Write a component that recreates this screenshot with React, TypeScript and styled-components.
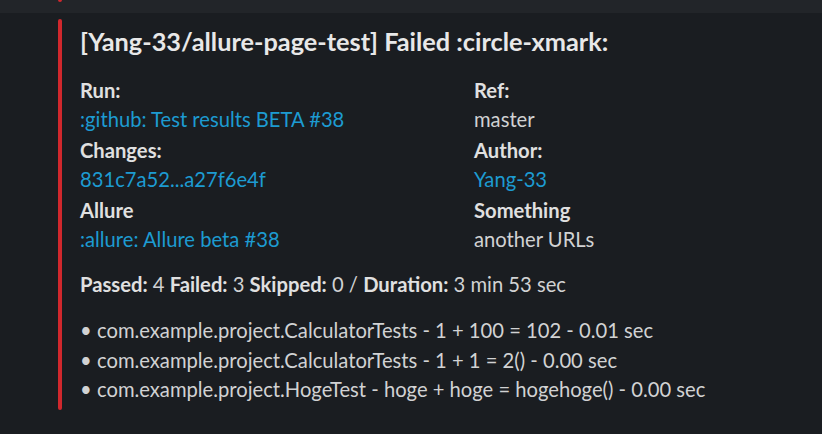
import styled, { createGlobalStyle } from 'styled-components';

const GlobalStyle = createGlobalStyle`
  html, body {
    margin: 0;
    padding: 0;
    background: #1a1d21;
  }
  body {
    font-family: Lato, 'Noto Sans', sans-serif;
    color: #d1d2d3;
  }
`;

interface Field {
  label: string;
  value: string;
  link?: boolean;
}

const fields: Field[] = [
  { label: 'Run:', value: ':github: Test results BETA #38', link: true },
  { label: 'Ref:', value: 'master' },
  { label: 'Changes:', value: '831c7a52...a27f6e4f', link: true },
  { label: 'Author:', value: 'Yang-33', link: true },
  { label: 'Allure', value: ':allure: Allure beta #38', link: true },
  { label: 'Something', value: 'another URLs' },
];

const tests = [
  'com.example.project.CalculatorTests - 1 + 100 = 102 - 0.01 sec',
  'com.example.project.CalculatorTests - 1 + 1 = 2() - 0.00 sec',
  'com.example.project.HogeTest - hoge + hoge = hogehoge() - 0.00 sec',
];

const App = () => {
  return (
    <Page>
      <GlobalStyle />
      <PrevMessage>
        <PrevBar />
      </PrevMessage>
      <Attachment>
        <ColorBar />
        <Body>
          <Title>[Yang-33/allure-page-test] Failed :circle-xmark:</Title>
          <Fields>
            {fields.map((f) => (
              <FieldItem key={f.label}>
                <Label>{f.label}</Label>
                <Value $link={f.link}>{f.value}</Value>
              </FieldItem>
            ))}
          </Fields>
          <Summary>
            <b>Passed:</b> 4 <b>Failed:</b> 3 <b>Skipped:</b> 0 / <b>Duration:</b> 3 min 53 sec
          </Summary>
          <TestList>
            {tests.map((t) => (
              <li key={t}>{t}</li>
            ))}
          </TestList>
        </Body>
      </Attachment>
    </Page>
  );
};

export default App;

const Page = styled.div`
  width: 822px;
  height: 434px;
  background: #1a1d21;
  overflow: hidden;
`;

const PrevMessage = styled.div`
  height: 13px;
  background: #222529;
  padding-left: 58px;
  box-sizing: border-box;
`;

const PrevBar = styled.div`
  width: 4px;
  height: 2px;
  background: #d0282d;
  border-radius: 0 0 2px 2px;
`;

const Attachment = styled.div`
  display: flex;
  margin: 6px 0 0 58px;
`;

const ColorBar = styled.div`
  flex: 0 0 4px;
  width: 4px;
  height: 391px;
  background: #d0282d;
  border-radius: 2px;
`;

const Body = styled.div`
  padding: 7px 0 0 18px;
  font-size: 20.2px;
`;

const Title = styled.div`
  font-size: 25.3px;
  line-height: 30px;
  font-weight: 700;
  color: #e8e8e8;
  margin-bottom: 20px;
`;

const Fields = styled.div`
  display: grid;
  grid-template-columns: 394px 1fr;
  row-gap: 2px;
`;

const FieldItem = styled.div`
  display: flex;
  flex-direction: column;
  line-height: 29px;
`;

const Label = styled.span`
  font-weight: 700;
  color: #e0e0e0;
`;

const Value = styled.span<{ $link?: boolean }>`
  color: ${({ $link }) => ($link ? '#1d9bd1' : '#d1d2d3')};
`;

const Summary = styled.div`
  margin-top: 15px;
  line-height: 30px;

  b {
    font-weight: 700;
    color: #e0e0e0;
  }
`;

const TestList = styled.ul`
  list-style: none;
  margin: 17px 0 0;
  padding: 0;
  line-height: 29.5px;

  li::before {
    content: '•';
    display: inline-block;
    width: 17px;
  }
`;
